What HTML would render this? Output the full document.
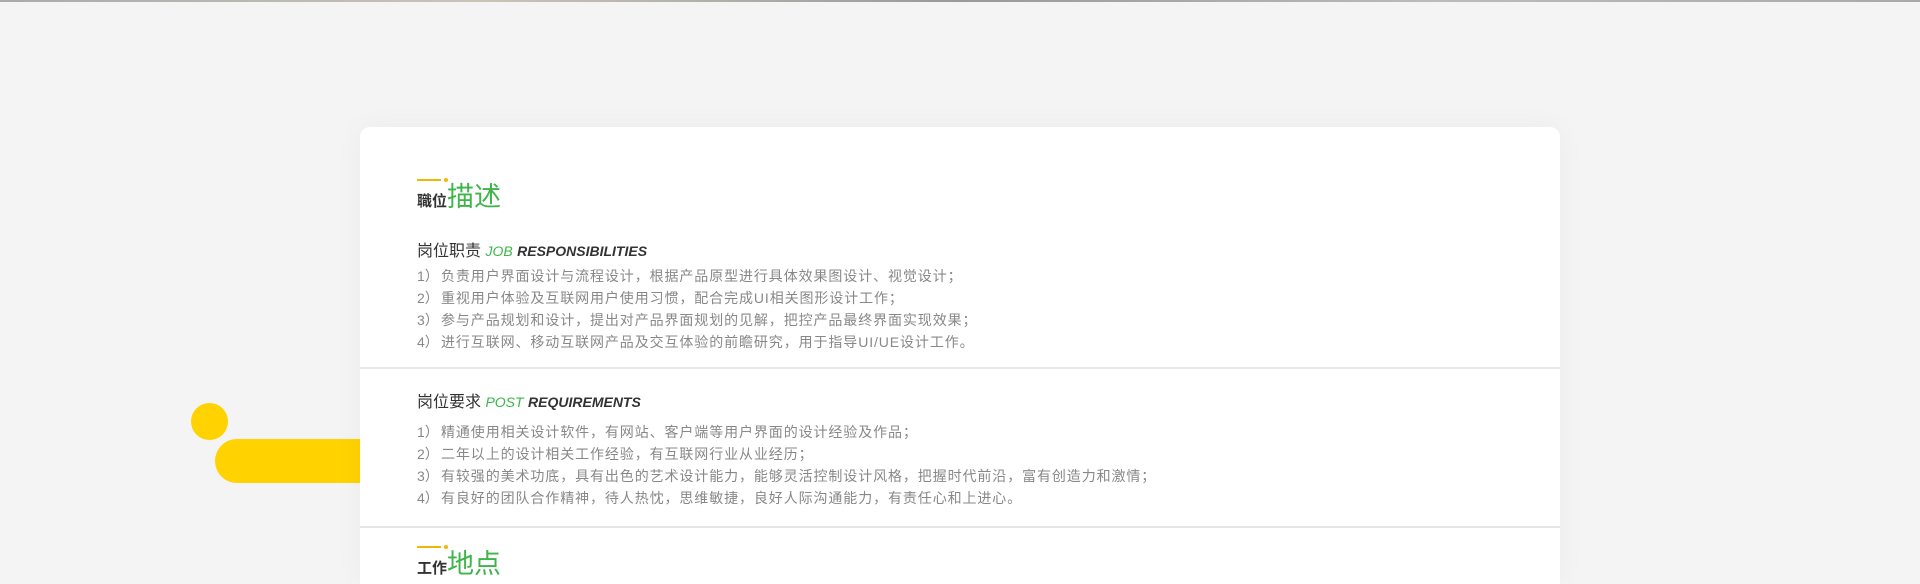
<!DOCTYPE html>
<html><head><meta charset="utf-8"><style>
html{overflow:hidden;height:584px;}
body{margin:0;width:1920px;height:584px;overflow:hidden;background:#f4f4f4;position:relative;font-family:"Liberation Sans","Noto Sans CJK SC",sans-serif;}
.top{position:absolute;left:0;top:0;width:1920px;height:2px;background:linear-gradient(90deg,#aaa,#c9c4b8,#999,#bbb,#a9a9a9);}
.card{position:absolute;left:360px;top:127px;width:1200px;height:457px;background:#fff;border-radius:10px 10px 0 0;box-shadow:0 0 30px rgba(0,0,0,0.04);}
.circ{position:absolute;left:191px;top:403px;width:37px;height:37px;border-radius:50%;background:#ffd200;}
.pill{position:absolute;left:215px;top:439px;width:160px;height:44px;border-radius:22px 0 0 22px;background:#ffd200;}
.t{position:absolute;white-space:nowrap;}
.ttl{left:417px;}
.ttl .s{font-size:15px;font-weight:bold;color:#333;}
.ttl .b{font-size:27px;color:#3db54a;}
.ttl .ln{position:absolute;left:0;top:4px;width:24px;height:2px;background:#f2b705;}
.ttl .dt{position:absolute;left:27px;top:3px;width:4px;height:4px;border-radius:50%;background:#f2b705;}
.h{left:417px;font-size:16px;color:#333;}
.h i{font-family:"Liberation Sans",sans-serif;font-size:14px;}
.h .g{color:#3db54a;}
.h .k{color:#333;font-weight:bold;}
.l{left:417px;font-size:14px;color:#888;line-height:22px;letter-spacing:0.9px;}
.l span{display:inline-block;width:24px;letter-spacing:0;}
.div{position:absolute;left:360px;width:1200px;height:2px;background:#e6e6e6;}
</style></head><body>
<div class="top"></div>
<div class="circ"></div>
<div class="pill"></div>
<div class="card"></div>
<div class="t ttl" style="top:175px"><span class="ln"></span><span class="dt"></span><span class="s">職位</span><span class="b">描述</span></div>
<div class="t h" style="top:237px">岗位职责 <i class="g">JOB</i> <i class="k">RESPONSIBILITIES</i></div>
<div class="t l" style="top:265px"><span>1）</span>负责用户界面设计与流程设计，根据产品原型进行具体效果图设计、视觉设计；<br><span>2）</span>重视用户体验及互联网用户使用习惯，配合完成UI相关图形设计工作；<br><span>3）</span>参与产品规划和设计，提出对产品界面规划的见解，把控产品最终界面实现效果；<br><span>4）</span>进行互联网、移动互联网产品及交互体验的前瞻研究，用于指导UI/UE设计工作。</div>
<div class="div" style="top:367px"></div>
<div class="t h" style="top:388px">岗位要求 <i class="g">POST</i> <i class="k">REQUIREMENTS</i></div>
<div class="t l" style="top:421px"><span>1）</span>精通使用相关设计软件，有网站、客户端等用户界面的设计经验及作品；<br><span>2）</span>二年以上的设计相关工作经验，有互联网行业从业经历；<br><span>3）</span>有较强的美术功底，具有出色的艺术设计能力，能够灵活控制设计风格，把握时代前沿，富有创造力和激情；<br><span>4）</span>有良好的团队合作精神，待人热忱，思维敏捷，良好人际沟通能力，有责任心和上进心。</div>
<div class="div" style="top:526px"></div>
<div class="t ttl" style="top:542px"><span class="ln"></span><span class="dt"></span><span class="s">工作</span><span class="b">地点</span></div>
</body></html>
